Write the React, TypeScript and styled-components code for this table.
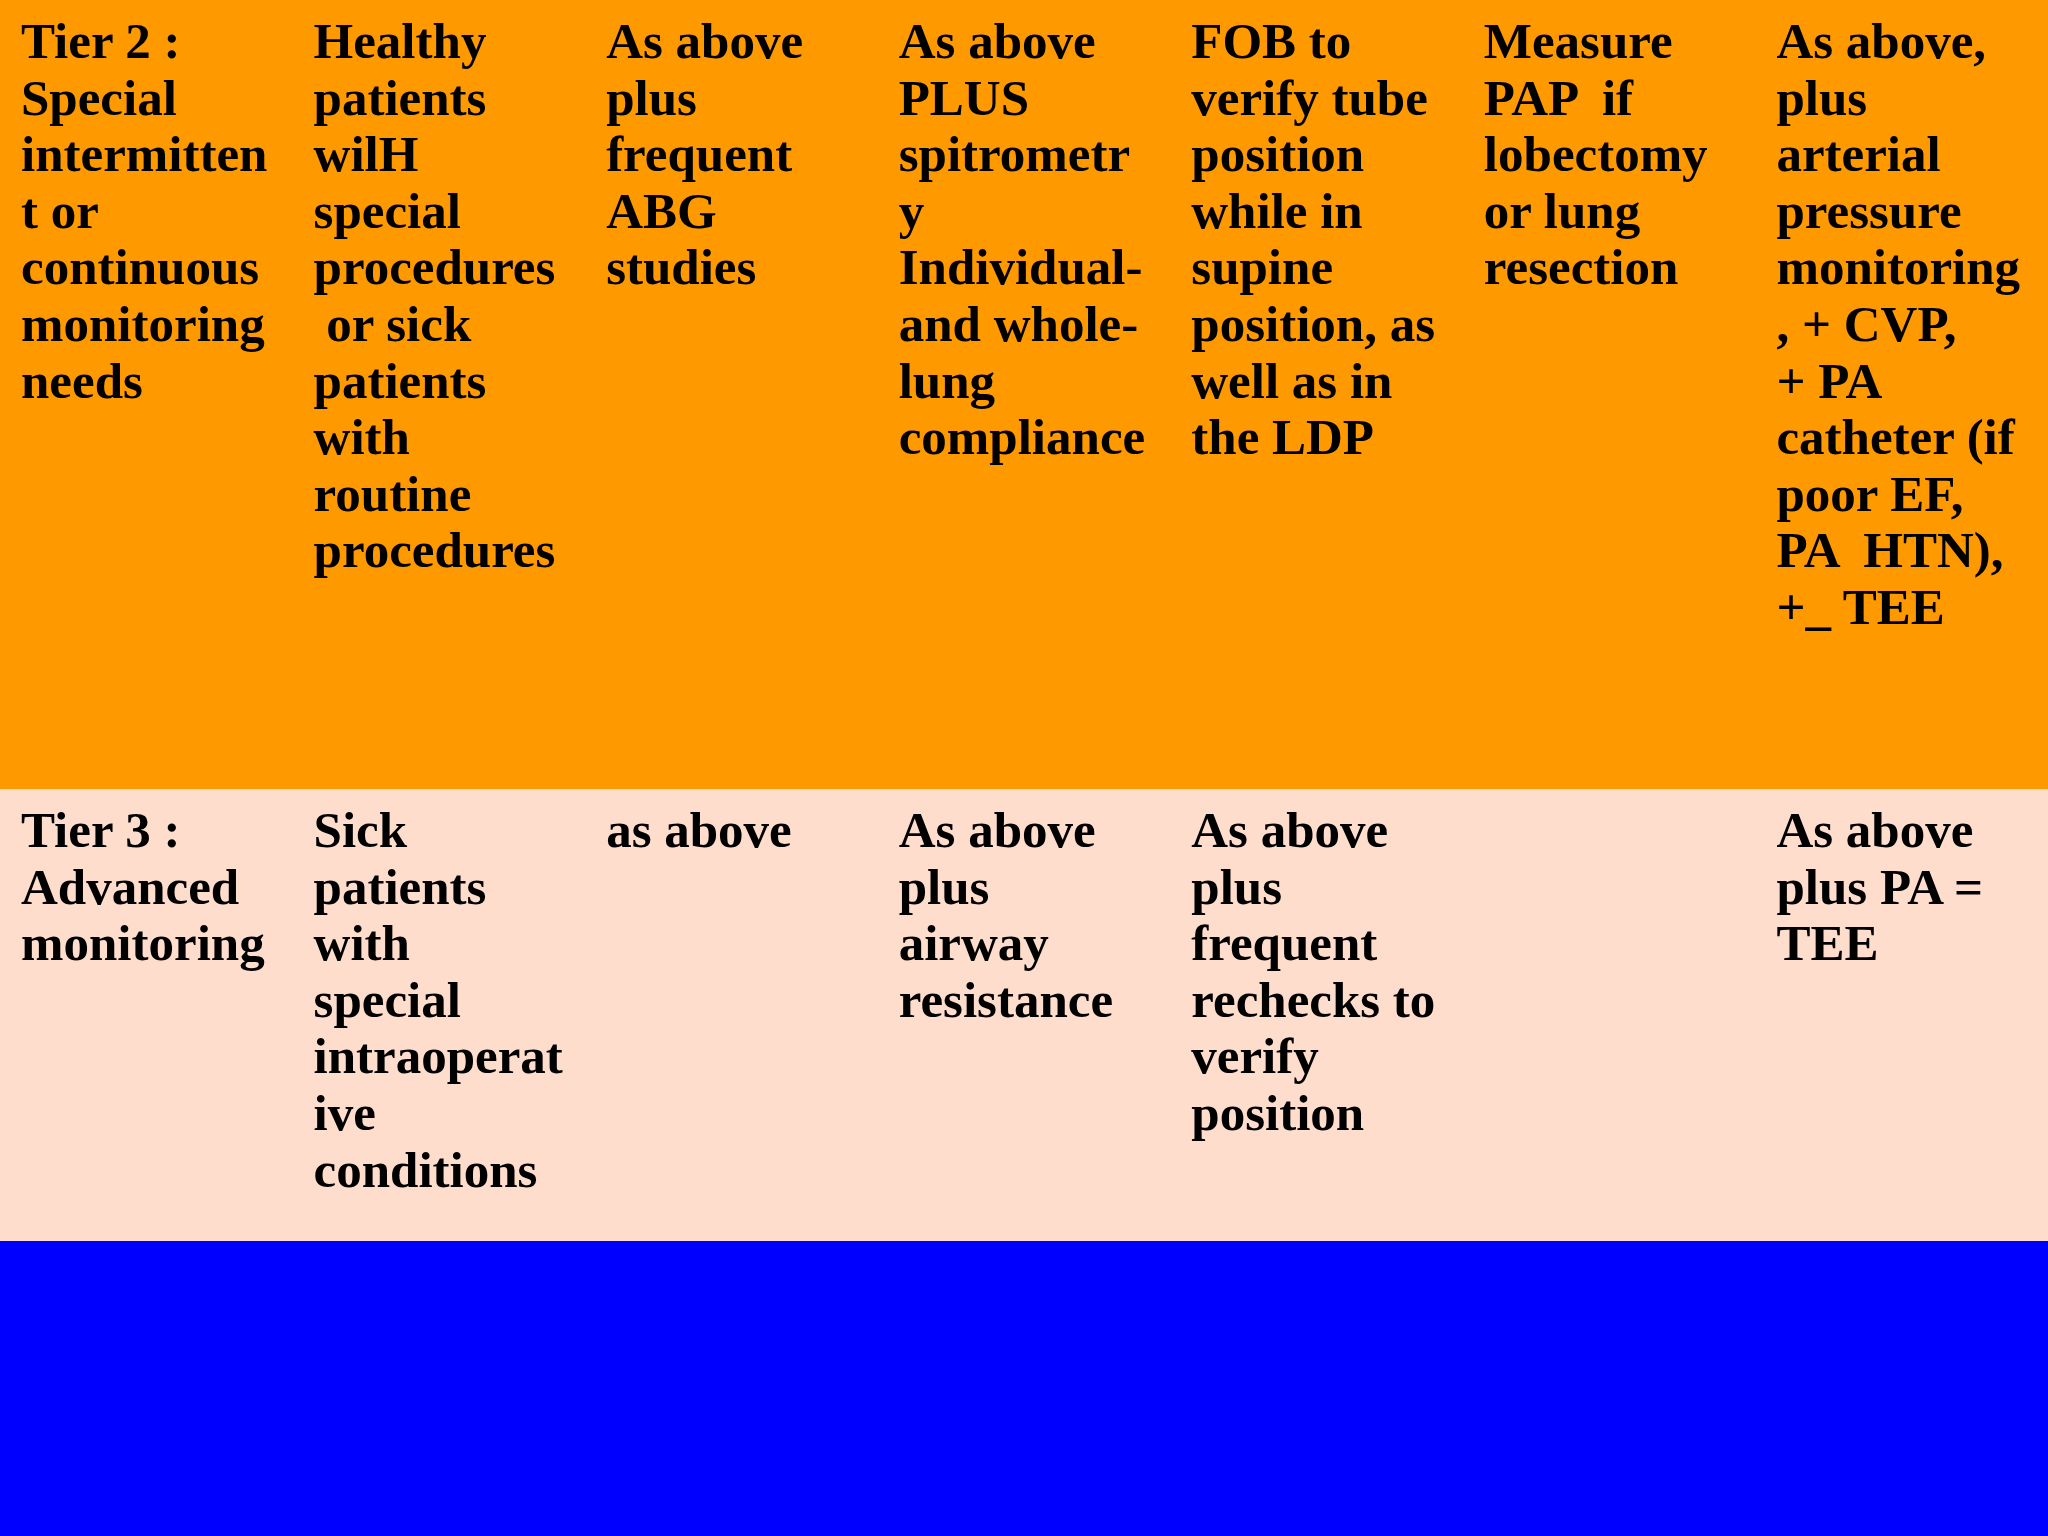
import styled, { createGlobalStyle } from "styled-components";

const GlobalStyle = createGlobalStyle`
  html, body {
    margin: 0;
    padding: 0;
  }
  body {
    background: #0000ff;
  }
`;

const Slide = styled.div`
  width: 2048px;
  height: 1536px;
  background: #0000ff;
  display: flex;
  flex-direction: column;
  font-family: "Liberation Serif", "Times New Roman", serif;
  font-weight: bold;
  color: #000;
`;

const Row = styled.div<{ $bg: string; $height: number }>`
  display: grid;
  grid-template-columns: repeat(7, 1fr);
  height: ${(props) => props.$height}px;
  background: ${(props) => props.$bg};
`;

const Cell = styled.div`
  padding: 13px 0 0 21px;
  font-size: 51px;
  line-height: 56.6px;
  overflow: visible;
`;

const Line = styled.div`
  white-space: pre;
`;

const tier2 = [
  ["Tier 2 :", "Special", "intermitten", "t or", "continuous", "monitoring", "needs"],
  ["Healthy", "patients", "wilH", "special", "procedures", " or sick", "patients", "with", "routine", "procedures"],
  ["As above", "plus", "frequent", "ABG", "studies"],
  ["As above", "PLUS", "spitrometr", "y", "Individual-", "and whole-", "lung", "compliance"],
  ["FOB to", "verify tube", "position", "while in", "supine", "position, as", "well as in", "the LDP"],
  ["Measure", "PAP  if", "lobectomy", "or lung", "resection"],
  ["As above,", "plus", "arterial", "pressure", "monitoring", ", + CVP,", "+ PA", "catheter (if", "poor EF,", "PA  HTN),", "+_ TEE"],
];

const tier3 = [
  ["Tier 3 :", "Advanced", "monitoring"],
  ["Sick", "patients", "with", "special", "intraoperat", "ive", "conditions"],
  ["as above"],
  ["As above", "plus", "airway", "resistance"],
  ["As above", "plus", "frequent", "rechecks to", "verify", "position"],
  [],
  ["As above", "plus PA =", "TEE"],
];

const TableRow = ({ cells, bg, height }: { cells: string[][]; bg: string; height: number }) => (
  <Row $bg={bg} $height={height}>
    {cells.map((lines, i) => (
      <Cell key={i}>
        {lines.map((l, j) => (
          <Line key={j}>{l}</Line>
        ))}
      </Cell>
    ))}
  </Row>
);

export default function App() {
  return (
    <>
      <GlobalStyle />
      <Slide>
        <TableRow cells={tier2} bg="#ff9900" height={789} />
        <TableRow cells={tier3} bg="#ffddcc" height={452} />
      </Slide>
    </>
  );
}
